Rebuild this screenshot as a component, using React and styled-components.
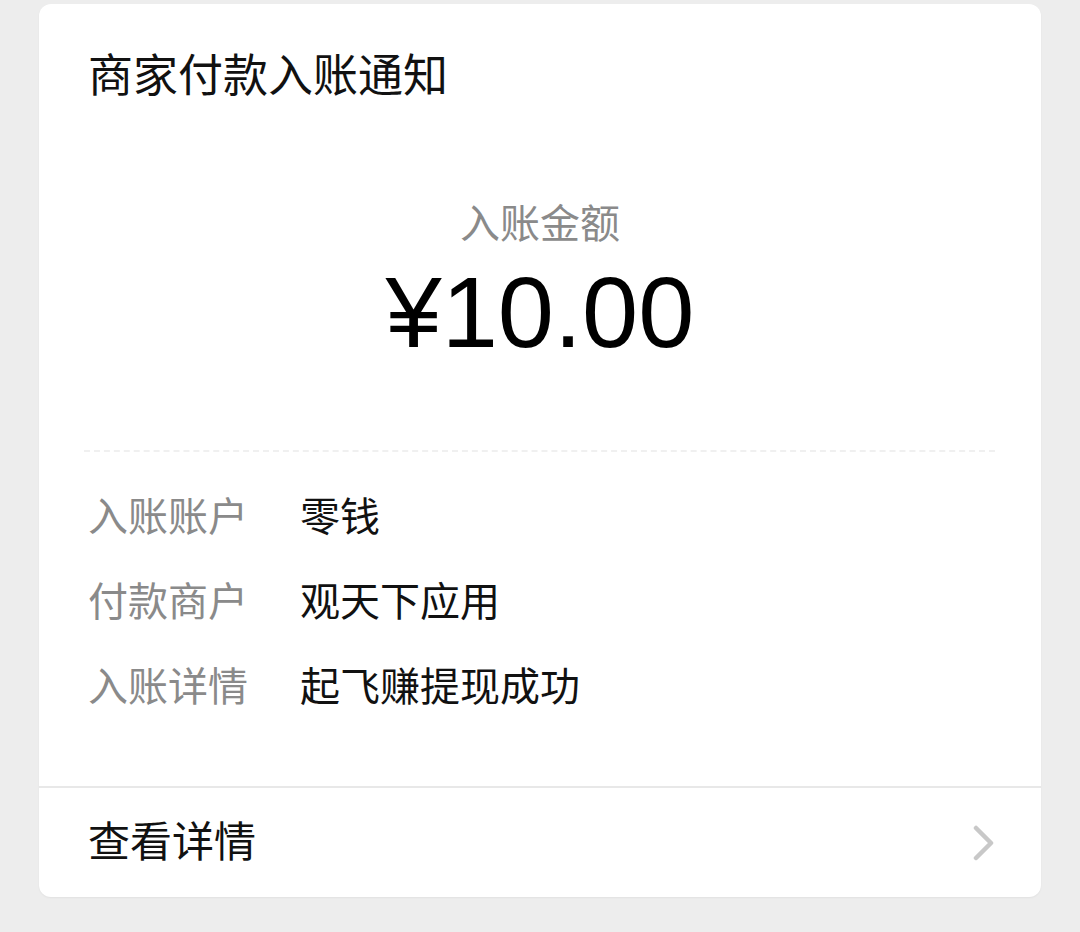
import React from "react";
import styled, { createGlobalStyle } from "styled-components";

const Global = createGlobalStyle`
  html, body { margin: 0; padding: 0; background: #ededed; }
  body { font-family: "Noto Sans CJK SC", "Noto Sans", sans-serif; }
`;

const Page = styled.div`
  width: 1080px;
  height: 932px;
  padding: 4px 39px 0;
  box-sizing: border-box;
`;

const Card = styled.div`
  background: #fff;
  border-radius: 12px;
  box-shadow: 0 1px 2px rgba(0,0,0,0.05);
  overflow: hidden;
`;

const Body = styled.div`
  padding: 38px 49px 75px;
`;

const Title = styled.div`
  font-size: 45px;
  line-height: 62px;
  color: #111;
`;

const AmountBlock = styled.div`
  display: flex;
  flex-direction: column;
  align-items: center;
  margin-top: 92px;
`;

const AmountLabel = styled.div`
  font-size: 40px;
  line-height: 50px;
  color: #8a8a8a;
`;

const Amount = styled.div`
  font-family: "Liberation Sans", Arial, sans-serif;
  font-size: 101px;
  line-height: 120px;
  margin-top: 6px;
  color: #000;
`;

const Dashed = styled.div`
  margin-top: 78px;
  margin-left: -4px;
  margin-right: -3px;
  border-top: 2px dashed #f0f0f0;
`;

const Rows = styled.div`
  display: flex;
  flex-direction: column;
  gap: 32px;
  margin-top: 36px;
`;

const Row = styled.div`
  display: flex;
  font-size: 40px;
  line-height: 53px;
`;

const Label = styled.span`
  width: 212px;
  color: #8a8a8a;
`;

const Value = styled.span`
  color: #111;
`;

const Footer = styled.div`
  border-top: 2px solid #e8e8e8;
  display: flex;
  align-items: center;
  justify-content: space-between;
  padding: 0 46px 8px 49px;
  height: 111px;
  box-sizing: border-box;
`;

const FooterText = styled.span`
  font-size: 42px;
  color: #111;
`;

const ChevronIcon = styled.svg`
  margin-top: 8px;
`;

const Chevron = () => (
  <ChevronIcon width="22" height="36" viewBox="0 0 22 36">
    <polyline points="3,3 18,18 3,33" fill="none" stroke="#c8c8c8" strokeWidth="4.5" strokeLinecap="round" strokeLinejoin="round" />
  </ChevronIcon>
);

const rows = [
  ["入账账户", "零钱"],
  ["付款商户", "观天下应用"],
  ["入账详情", "起飞赚提现成功"],
];

export default function App() {
  return (
    <>
      <Global />
      <Page>
        <Card>
          <Body>
            <Title>商家付款入账通知</Title>
            <AmountBlock>
              <AmountLabel>入账金额</AmountLabel>
              <Amount>¥10.00</Amount>
            </AmountBlock>
            <Dashed />
            <Rows>
              {rows.map(([l, v]) => (
                <Row key={l}>
                  <Label>{l}</Label>
                  <Value>{v}</Value>
                </Row>
              ))}
            </Rows>
          </Body>
          <Footer>
            <FooterText>查看详情</FooterText>
            <Chevron />
          </Footer>
        </Card>
      </Page>
    </>
  );
}
